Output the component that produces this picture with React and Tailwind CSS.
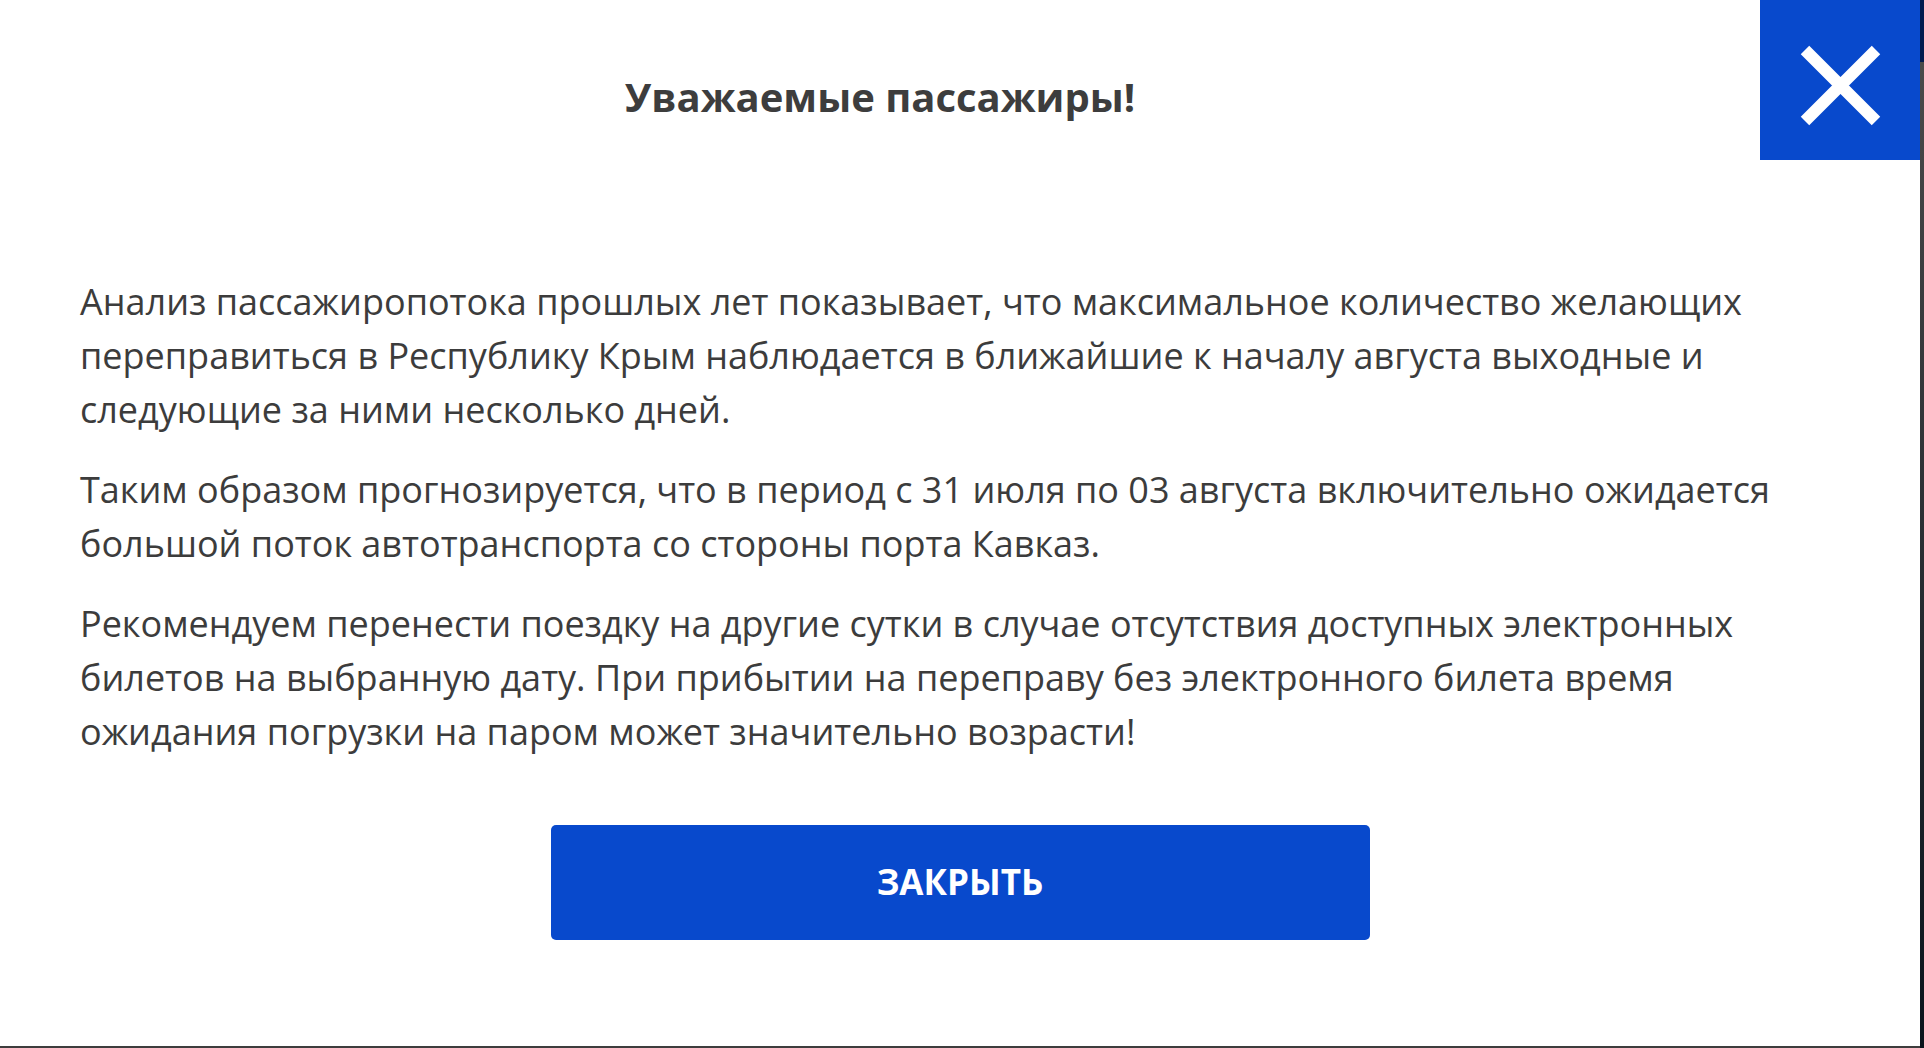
import React from 'react'

const paragraphs = [
  'Анализ пассажиропотока прошлых лет показывает, что максимальное количество желающих переправиться в Республику Крым наблюдается в ближайшие к началу августа выходные и следующие за ними несколько дней.',
  'Таким образом прогнозируется, что в период с 31 июля по 03 августа включительно ожидается большой поток автотранспорта со стороны порта Кавказ.',
  'Рекомендуем перенести поездку на другие сутки в случае отсутствия доступных электронных билетов на выбранную дату. При прибытии на переправу без электронного билета время ожидания погрузки на паром может значительно возрасти!',
]

export default function App() {
  return (
    <div className="flex h-[1048px] w-[1924px] items-start overflow-hidden bg-[#3d3d3d] font-['Open_Sans',sans-serif]">
      {/* Modal */}
      <div className="flex h-[1046px] w-[1920px] flex-col bg-white">
        <div className="flex">
          <h2 className="flex-1 pt-[68px] text-center text-[40px] font-bold leading-[57px] text-[#3d3d3d]">
            Уважаемые пассажиры!
          </h2>
          <button
            className="flex h-[160px] w-[160px] shrink-0 bg-[#0849cc]"
            aria-label="Закрыть"
          >
            <svg width="160" height="160" viewBox="0 0 160 160">
              <path d="M45 50 L116 121 M116 50 L45 121" stroke="#fff" strokeWidth="12" fill="none" />
            </svg>
          </button>
        </div>

        <div className="mt-[115px] px-[80px]">
          {paragraphs.map((p, i) => (
            <p key={i} className="mb-[26px] text-[36px] leading-[54px] text-[#3c3c3c]">
              {p}
            </p>
          ))}
        </div>

        <button className="mx-auto mt-[40px] h-[115px] w-[819px] rounded-[5px] bg-[#0849cc] text-[35px] font-bold text-white">
          ЗАКРЫТЬ
        </button>
      </div>

      {/* edge of the page behind the modal */}
      <div className="flex h-full w-[4px] flex-col">
        <div className="h-[62px] bg-[#021a4f]" />
        <div className="flex-1 bg-gradient-to-b from-[#4a4a4a] to-[#0a141c]" />
      </div>
    </div>
  )
}
